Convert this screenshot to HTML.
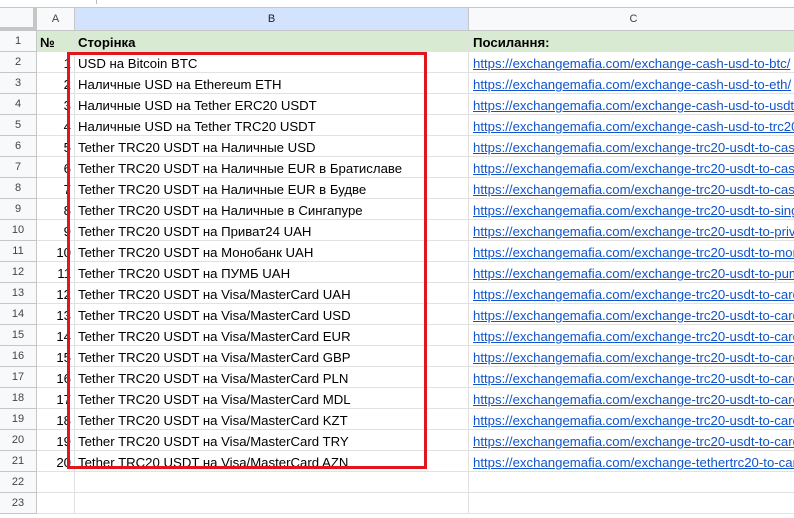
<!DOCTYPE html>
<html><head><meta charset="utf-8"><style>
*{margin:0;padding:0;box-sizing:border-box}
body{width:794px;height:518px;overflow:hidden;background:#fff;font-family:"Liberation Sans",Arial,sans-serif;font-size:13.2px;color:#000;position:relative}
.c{position:absolute;border-right:1px solid #e1e1e1;border-bottom:1px solid #e1e1e1;white-space:nowrap;overflow:hidden;line-height:23px}
.h{background:#f8f9fa;color:#444;font-size:11px;text-align:center;border-color:#c4c7c5}
a{color:#1155cc;text-decoration:underline}
</style></head><body>
<div style="position:absolute;left:0;top:7px;width:794px;height:1px;background:#c4c7c5"></div>
<div style="position:absolute;left:96px;top:0;width:1px;height:4px;background:#bbb"></div>
<div id="g"></div>
<div style="position:absolute;left:67px;top:52px;width:360px;height:417px;border:3px solid #e0161e"></div>
<script>
var B=["USD на Bitcoin BTC","Наличные USD на Ethereum ETH","Наличные USD на Tether ERC20 USDT","Наличные USD на Tether TRC20 USDT","Tether TRC20 USDT на Наличные USD","Tether TRC20 USDT на Наличные EUR в Братиславе","Tether TRC20 USDT на Наличные EUR в Будве","Tether TRC20 USDT на Наличные в Сингапуре","Tether TRC20 USDT на Приват24 UAH","Tether TRC20 USDT на Монобанк UAH","Tether TRC20 USDT на ПУМБ UAH","Tether TRC20 USDT на Visa/MasterCard UAH","Tether TRC20 USDT на Visa/MasterCard USD","Tether TRC20 USDT на Visa/MasterCard EUR","Tether TRC20 USDT на Visa/MasterCard GBP","Tether TRC20 USDT на Visa/MasterCard PLN","Tether TRC20 USDT на Visa/MasterCard MDL","Tether TRC20 USDT на Visa/MasterCard KZT","Tether TRC20 USDT на Visa/MasterCard TRY","Tether TRC20 USDT на Visa/MasterCard AZN"];
var C=["exchange-cash-usd-to-btc/","exchange-cash-usd-to-eth/","exchange-cash-usd-to-usdt","exchange-cash-usd-to-trc20","exchange-trc20-usdt-to-cash","exchange-trc20-usdt-to-cash","exchange-trc20-usdt-to-cash","exchange-trc20-usdt-to-sing","exchange-trc20-usdt-to-priv","exchange-trc20-usdt-to-mon","exchange-trc20-usdt-to-pum","exchange-trc20-usdt-to-card","exchange-trc20-usdt-to-card","exchange-trc20-usdt-to-card","exchange-trc20-usdt-to-card","exchange-trc20-usdt-to-card","exchange-trc20-usdt-to-card","exchange-trc20-usdt-to-card","exchange-trc20-usdt-to-card","exchange-tethertrc20-to-card"];
var h='';
function cell(x,y,w,hh,cls,st,t){h+='<div class="c '+cls+'" style="left:'+x+'px;top:'+y+'px;width:'+w+'px;height:'+hh+'px;'+st+'">'+t+'</div>';}
cell(0,8,37,23,'h','background:#f8f9fa;border-right:4px solid #c4c7c5;border-bottom:4px solid #c4c7c5','');
cell(37,8,38,23,'h','line-height:22px','A');
cell(75,8,394,23,'h','background:#d3e3fd;color:#222;line-height:22px','B');
cell(469,8,330,23,'h','line-height:22px','C');
for(var r=1;r<=23;r++){
 var y=31+(r-1)*21;
 cell(0,y,37,21,'h','line-height:21px',r);
 var a='',b='',c='',bg='';
 if(r==1){a='<b>№</b>';b='<b>Сторінка</b>';c='<b>Посилання:</b>';bg='background:#d9ead3;';}
 else if(r<=21){a=r-1;b=B[r-2];c='<a>https://exchangemafia.com/'+C[r-2]+'</a>';}
 cell(37,y,38,21,'',bg+'padding:0 3px;text-align:'+(r==1?'left':'right'),a);
 cell(75,y,394,21,'',bg+'padding:0 3px',b);
 cell(469,y,330,21,'',bg+'padding:0 4px',c);
}
document.getElementById('g').innerHTML=h;
</script>
</body></html>
